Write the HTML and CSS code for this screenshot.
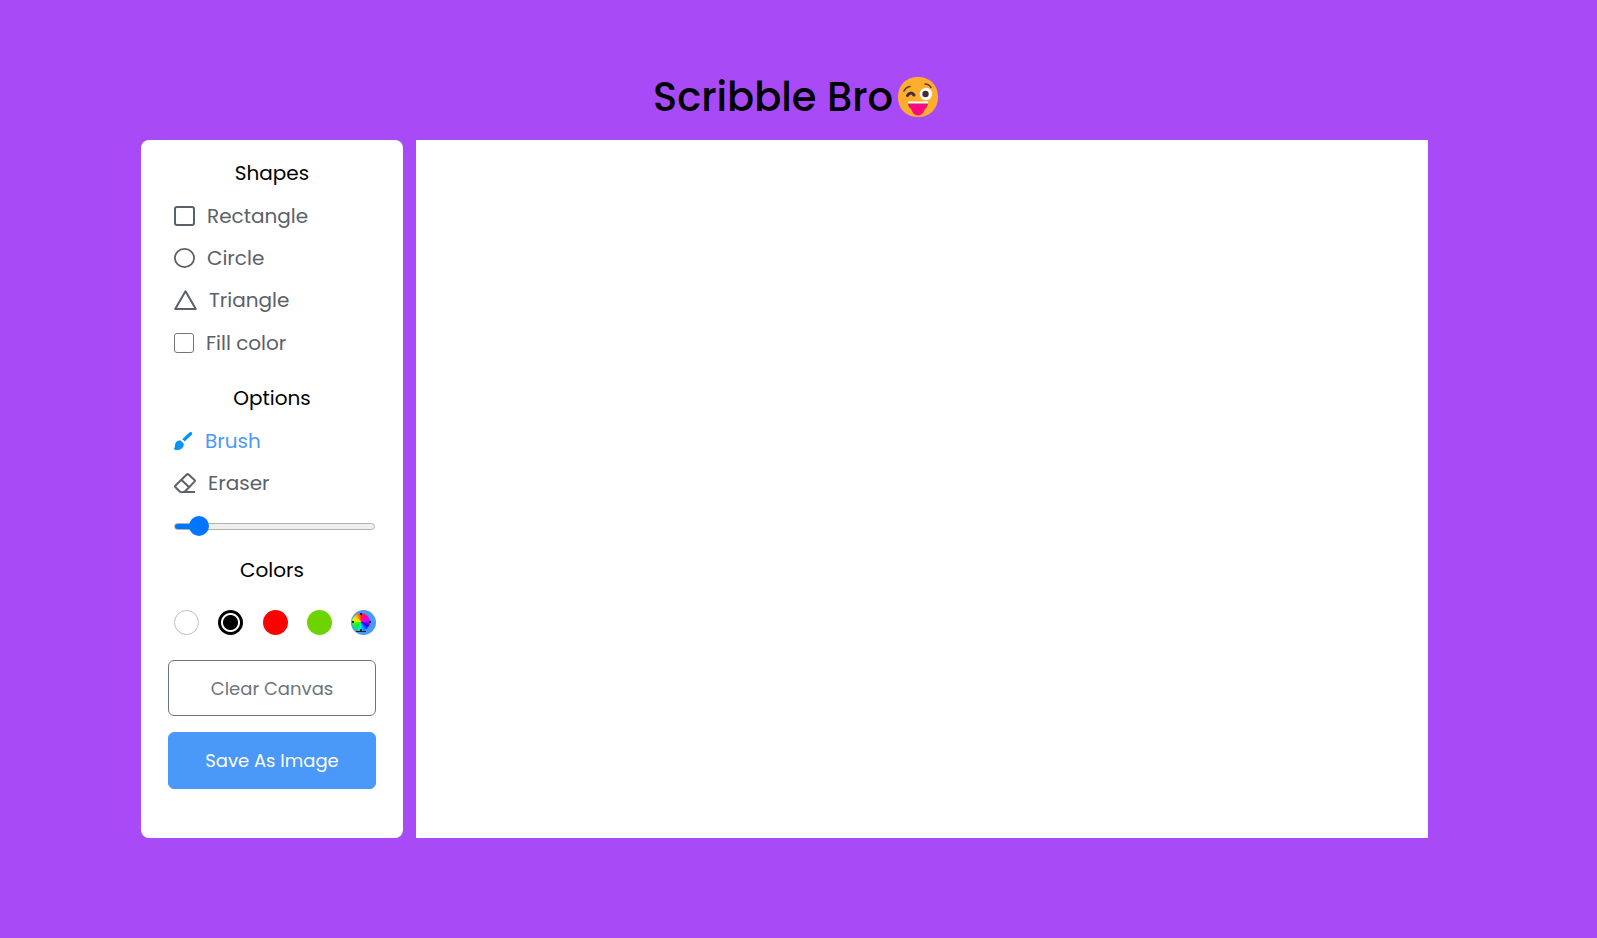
FILE: index.html
```html
<!DOCTYPE html>
<html lang="en">
<head>
<meta charset="utf-8">
<title>Scribble Bro</title>
<link rel="stylesheet" href="styles.css">
</head>
<body>
<header class="header">
  <h1 class="title">Scribble Bro</h1>
  <svg class="emoji" viewBox="0 0 40 40" aria-hidden="true">
    <path d="M20 0C32 0 40 8 40 20S32 40 20 40 0 32 0 20 8 0 20 0Z" fill="#ffad2d"/>
    <path d="M6 14Q8 10 12 9.500M27 7Q31 7 33 10.500" fill="none" stroke="#59402c" stroke-width="1.600" stroke-linecap="round"/>
    <path d="M9.500 18.500Q12.500 14 16 18" fill="none" stroke="#432b38" stroke-width="3" stroke-linecap="round"/>
    <circle cx="28" cy="17" r="6.200" fill="#fff"/>
    <circle cx="27.500" cy="17" r="3.200" fill="#432b38"/>
    <path d="M10 25H30Q30 31 26 32H14Q10 31 10 25Z" fill="#a62c52"/>
    <path d="M11.500 27H28.500Q26 38.500 20 38.500T11.500 27Z" fill="#ff087f"/>
    <path d="M10 24.500H30V26.500H10Z" fill="#fff"/>
  </svg>
</header>
<main class="workspace">
  <section class="tools" aria-label="Drawing tools">
    <h2 class="heading">Shapes</h2>
    <button class="tool" type="button">
      <svg width="21" height="20" viewBox="0 0 21 20" fill="none" stroke="currentColor" stroke-width="2" aria-hidden="true"><rect x="1" y="1" width="19" height="18" rx="2"/></svg>
      Rectangle
    </button>
    <button class="tool" type="button">
      <svg width="21" height="20" viewBox="0 0 21 20" fill="none" stroke="currentColor" stroke-width="1.800" aria-hidden="true"><ellipse cx="10.500" cy="10" rx="9.600" ry="9.100"/></svg>
      Circle
    </button>
    <button class="tool" type="button">
      <svg width="23" height="20" viewBox="0 0 23 20" fill="none" stroke="currentColor" stroke-width="2" stroke-linejoin="round" aria-hidden="true"><path d="M11.500 1.300L21.800 19H1.200Z"/></svg>
      Triangle
    </button>
    <label class="tool"><input class="check" type="checkbox">Fill color</label>

    <h2 class="heading heading-spaced">Options</h2>
    <button class="tool active" type="button">
      <svg width="19" height="18" viewBox="0 0 19 18" fill="#0095f6" aria-hidden="true"><path d="M17.800.5C16.900-.2 15.800.1 14.800 1L8.200 7.300Q9.800 8 10.600 9.600L17.500 3C18.400 2.100 18.500 1.200 17.800.5Z"/><path d="M6.700 8.500C3.500 8 1 10 1 13.500Q1 15.500 0 16.500Q.2 18 2.300 18C6.500 18 10.300 15.800 9.700 11.700Z"/></svg>
      Brush
    </button>
    <button class="tool" type="button">
      <svg width="22" height="20" viewBox="0 0 22 20" fill="none" stroke="currentColor" stroke-width="2" stroke-linejoin="round" aria-hidden="true"><path d="M12.800 1.500Q13.700.7 14.600 1.500L20.500 7Q21.300 7.800 20.500 8.600L11 18.500Q8 19.800 5.800 18.500L1.500 14.300Q.7 13.400 1.500 12.500ZM7.500 7L15 14M9 19H21"/></svg>
      Eraser
    </button>
    <div class="slider-row">
      <input class="slider" type="range" min="0" max="100" value="8" aria-label="Brush size">
    </div>

    <h2 class="heading">Colors</h2>
    <div class="swatches">
      <button class="swatch white" type="button" aria-label="White"></button>
      <button class="swatch black" type="button" aria-label="Black"></button>
      <button class="swatch red" type="button" aria-label="Red"></button>
      <button class="swatch green" type="button" aria-label="Green"></button>
      <button class="swatch picker" type="button" aria-label="Custom color">
        <span class="wheel"></span>
        <svg class="ticks" viewBox="0 0 25 25" aria-hidden="true"><path d="M9 3h2v2H9zM1 11h2v2H1zM18 11h2v2h-2zM9 19h2v2H9zM5 21h10v1H5z" fill="#17202b"/></svg>
      </button>
    </div>
    <button class="btn clear" type="button">Clear Canvas</button>
    <button class="btn save" type="button">Save As Image</button>
  </section>
  <canvas class="board" aria-label="Drawing board"></canvas>
</main>
</body>
</html>
```
FILE: styles.css
```css
* { box-sizing: border-box; }
body {
  margin: 0;
  min-height: 100vh;
  padding-top: 56px;
  background: #a84af6;
  font-family: Poppins, Inter, "Open Sans", sans-serif;
  color: #000;
}
button, input { font: inherit; margin: 0; }
.header {
  display: flex;
  align-items: center;
  justify-content: center;
  gap: 5px;
  height: 84px;
  padding: 0 6px 2px 0;
}
.title { margin: 0; font-size: 40px; font-weight: 500; line-height: 60px; }
.emoji { width: 40px; height: 40px; }
.workspace {
  display: flex;
  gap: 13px;
  padding: 0 169px 56px 141px;
}
.tools {
  display: flex;
  flex-direction: column;
  flex: 0 0 262px;
  padding: 12px 27px 49px;
  border-radius: 8px;
  background: #fff;
}
.board { flex: 1; min-width: 0; width: 0; background: #fff; }
.heading {
  margin: 0;
  font-size: 20px;
  font-weight: 400;
  line-height: 43px;
  text-align: center;
}
.heading-spaced { margin-top: 13px; }
.tool {
  display: flex;
  align-items: center;
  gap: 12px;
  height: 42px;
  padding: 0 6px;
  border: 0;
  background: none;
  color: #5a6168;
  font-size: 20px;
  font-weight: 400;
  text-align: left;
}
label.tool { height: 43px; }
.active { color: #4a98f7; }
.check {
  appearance: none;
  width: 20px;
  height: 20px;
  border: 1px solid #767676;
  border-radius: 3px;
}
.slider-row { display: flex; align-items: center; height: 45px; padding: 0 1px 0 6px; }
.slider { appearance: none; width: 100%; height: 20px; background: none; }
.slider::-webkit-slider-runnable-track {
  height: 7px;
  border: 1px solid #b2b2b2;
  border-radius: 4px;
  background: linear-gradient(90deg, #0075ff 12%, #efefef 12%) border-box;
}
.slider::-webkit-slider-thumb {
  appearance: none;
  width: 20px;
  height: 20px;
  margin-top: -8px;
  border-radius: 50%;
  background: #0075ff;
}
.swatches { display: flex; justify-content: space-between; margin: 18px 0 25px; padding-left: 6px; }
.swatch { position: relative; width: 25px; height: 25px; padding: 0; border: 0; border-radius: 50%; overflow: hidden; }
.white { border: 1px solid #bfbfbf; background: #fff; }
.black { background: radial-gradient(circle, #000 7px, #fff 8px, #fff 9px, #000 10px); }
.red { background: #f00; }
.green { background: #6dd400; }
.picker { background: #4a98f7; }
.wheel {
  position: absolute;
  left: 1px;
  top: 3px;
  width: 18px;
  height: 18px;
  border-radius: 50%;
  background: conic-gradient(#f22, #f0a 45deg, #c0f 80deg, #20f 120deg, #08f 155deg, #0ee 185deg, #0e5 215deg, #2f0 250deg, #ef0 290deg, #fa0 325deg, #f22);
}
.ticks { position: absolute; left: 0; top: 0; width: 25px; height: 25px; }
.btn { height: 56px; border: 1px solid #6c757d; border-radius: 6px; font-size: 18px; }
.clear { background: none; color: #6c757d; }
.save { height: 57px; margin-top: 16px; border-color: #4a98f7; background: #4a98f7; color: #fff; }
```
